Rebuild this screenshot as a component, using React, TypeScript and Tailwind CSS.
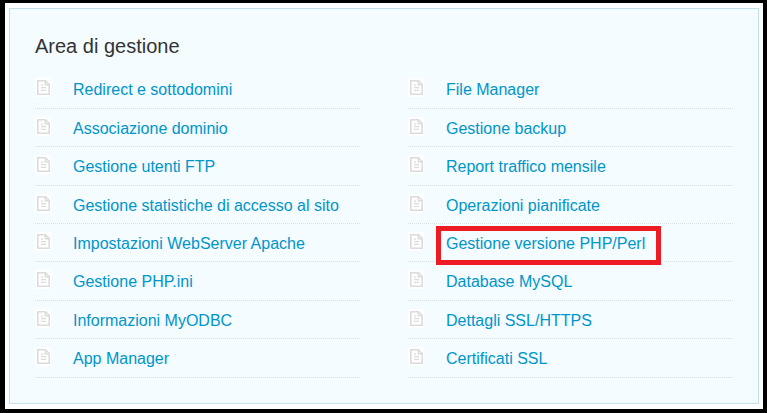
interface MenuLink {
  label: string;
  highlighted?: boolean;
}

const leftLinks: MenuLink[] = [
  { label: 'Redirect e sottodomini' },
  { label: 'Associazione dominio' },
  { label: 'Gestione utenti FTP' },
  { label: 'Gestione statistiche di accesso al sito' },
  { label: 'Impostazioni WebServer Apache' },
  { label: 'Gestione PHP.ini' },
  { label: 'Informazioni MyODBC' },
  { label: 'App Manager' },
];

const rightLinks: MenuLink[] = [
  { label: 'File Manager' },
  { label: 'Gestione backup' },
  { label: 'Report traffico mensile' },
  { label: 'Operazioni pianificate' },
  { label: 'Gestione versione PHP/Perl', highlighted: true },
  { label: 'Database MySQL' },
  { label: 'Dettagli SSL/HTTPS' },
  { label: 'Certificati SSL' },
];

function PageIcon() {
  return (
    <svg
      aria-hidden="true"
      viewBox="0 0 16 19"
      className="mt-2 h-[19px] w-4 shrink-0 bg-white"
      fill="none"
      stroke="#dcdcdc"
    >
      <path d="M2.8 2.8h7.7l3.7 3.7v9.7H2.8z" strokeWidth="1.6" />
      <path d="M10.3 2.8v3.9h3.9" strokeWidth="1.4" />
      <path d="M6 7.2h2M6 9.7h5M6 12.3h5" strokeWidth="1.2" />
    </svg>
  );
}

function LinkList({ links }: { links: MenuLink[] }) {
  return (
    <ul className="min-w-0 flex-1">
      {links.map((link) => (
        <li
          key={link.label}
          className="flex h-[38px] border-b border-dotted border-[#d5dfe2] nth-[5n+1]:h-[39px] nth-[5n+3]:h-[39px]"
        >
          <PageIcon />
          <a
            href="#"
            className="relative ml-[22px] whitespace-nowrap pt-2 text-base leading-6 text-[#0095ca] hover:underline"
          >
            {link.label}
            {link.highlighted && (
              <span className="pointer-events-none absolute -bottom-1 -left-2.5 -right-4 top-0.5 border-5 border-[#ed1c24]" />
            )}
          </a>
        </li>
      ))}
    </ul>
  );
}

export default function App() {
  return (
    <main className="flex min-h-screen flex-col border-4 border-t-3 border-l-5 border-black bg-white px-1 py-[5px] font-['Liberation_Sans',Arial,sans-serif]">
      <section className="flex-1 border border-[#c5dfec] bg-[#f4fcff] px-[25px] pb-[25px] pt-6">
        <h1 className="mb-2.5 text-xl leading-[27px] text-[#333333]">Area di gestione</h1>
        <nav aria-label="Area di gestione" className="flex gap-12">
          <LinkList links={leftLinks} />
          <LinkList links={rightLinks} />
        </nav>
      </section>
    </main>
  );
}
